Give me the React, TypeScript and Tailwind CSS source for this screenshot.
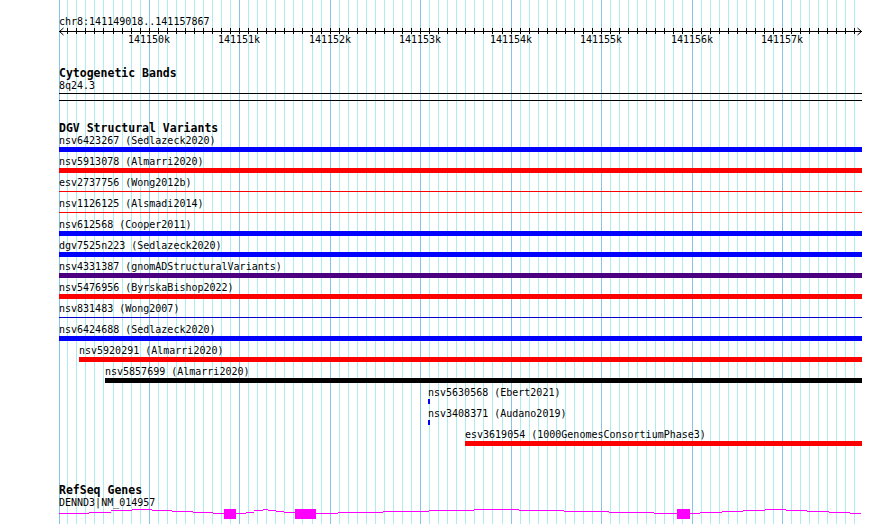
import React from "react";

type Variant = {
  label: string;
  x: number;
  kind: "bar" | "line" | "tick";
  color: string;
};

const variants: Variant[] = [
  { label: "nsv6423267 (Sedlazeck2020)", x: 59, kind: "bar", color: "bg-[#0000ff]" },
  { label: "nsv5913078 (Almarri2020)", x: 59, kind: "bar", color: "bg-[#ff0000]" },
  { label: "esv2737756 (Wong2012b)", x: 59, kind: "line", color: "bg-[#ff0000]" },
  { label: "nsv1126125 (Alsmadi2014)", x: 59, kind: "line", color: "bg-[#ff0000]" },
  { label: "nsv612568 (Cooper2011)", x: 59, kind: "bar", color: "bg-[#0000ff]" },
  { label: "dgv7525n223 (Sedlazeck2020)", x: 59, kind: "bar", color: "bg-[#0000ff]" },
  { label: "nsv4331387 (gnomADStructuralVariants)", x: 59, kind: "bar", color: "bg-[#4b0082]" },
  { label: "nsv5476956 (ByrskaBishop2022)", x: 59, kind: "bar", color: "bg-[#ff0000]" },
  { label: "nsv831483 (Wong2007)", x: 59, kind: "line", color: "bg-[#0000cc]" },
  { label: "nsv6424688 (Sedlazeck2020)", x: 59, kind: "bar", color: "bg-[#0000ff]" },
  { label: "nsv5920291 (Almarri2020)", x: 79, kind: "bar", color: "bg-[#ff0000]" },
  { label: "nsv5857699 (Almarri2020)", x: 105, kind: "bar", color: "bg-black" },
  { label: "nsv5630568 (Ebert2021)", x: 428, kind: "tick", color: "bg-[#0000ff]" },
  { label: "nsv3408371 (Audano2019)", x: 428, kind: "tick", color: "bg-[#0000ff]" },
  { label: "esv3619054 (1000GenomesConsortiumPhase3)", x: 465, kind: "bar", color: "bg-[#ff0000]" },
];

// minor gridlines every 100bp, major every 1kb
const ticks = Array.from({ length: 88 }, (_, i) => {
  const k = i - 9;
  return { x: Math.round(148.7 + 9.047 * k), major: k % 10 === 0, k };
});

const rulerLabels = ticks
  .filter((t) => t.major)
  .map((t) => ({ x: t.x, text: `${141150 + t.k / 10}k` }));

const intron: [number, number, number][] = [
  [59, 89, 513], [89, 111, 512], [111, 132, 510], [132, 152, 509], [152, 172, 510],
  [172, 193, 511], [193, 213, 512], [213, 224, 513],
  [236, 246, 513], [246, 254, 512], [254, 263, 510], [263, 268, 509], [268, 276, 510],
  [276, 284, 511], [284, 295, 512],
  [316, 338, 513], [338, 383, 512], [383, 429, 511], [429, 474, 510], [474, 519, 509],
  [519, 564, 510], [564, 609, 511], [609, 654, 512], [654, 677, 513],
  [690, 700, 513], [700, 722, 512], [722, 743, 511], [743, 765, 510], [765, 786, 509],
  [786, 807, 510], [807, 829, 511], [829, 850, 512], [850, 861, 513],
];

const exons: [number, number][] = [
  [224, 236],
  [295, 316],
  [677, 690],
];

function Grid() {
  return (
    <svg className="absolute inset-0" width={890} height={524} shapeRendering="crispEdges">
      <line x1={59.5} x2={59.5} y1={0} y2={524} stroke="#86c5ea" />
      {ticks.map((t) => (
        <line
          key={t.k}
          x1={t.x + 0.5}
          x2={t.x + 0.5}
          y1={0}
          y2={524}
          stroke={t.major ? "#86c5ea" : "#aeecf0"}
        />
      ))}
    </svg>
  );
}

function Ruler() {
  return (
    <div className="relative h-[21px]">
      <svg className="absolute left-0 top-0" width={890} height={9} shapeRendering="crispEdges">
        <line x1={59} x2={862} y1={4.5} y2={4.5} stroke="#000" />
        {ticks.map((t) => (
          <line key={t.k} x1={t.x + 0.5} x2={t.x + 0.5} y1={1} y2={7} stroke="#000" />
        ))}
      </svg>
      <svg className="absolute left-0 top-0" width={890} height={9}>
        <polyline points="63.5,1 59.5,4.5 63.5,8" fill="none" stroke="#000" />
        <polyline points="857.5,1 861.5,4.5 857.5,8" fill="none" stroke="#000" />
      </svg>
      {rulerLabels.map((l) => (
        <span
          key={l.text}
          className="absolute top-[7px] -translate-x-1/2 text-[10px] leading-[11px]"
          style={{ left: l.x }}
        >
          {l.text}
        </span>
      ))}
    </div>
  );
}

function VariantRow({ v }: { v: Variant }) {
  const offset = v.x - 59;
  return (
    <div className="h-[21px] pl-[59px] w-[862px]">
      <div className="h-[13px] whitespace-nowrap text-[10px] leading-[13px]" style={{ marginLeft: offset }}>
        {v.label}
      </div>
      {v.kind === "bar" && <div className={`h-[5px] ${v.color}`} style={{ marginLeft: offset }} />}
      {v.kind === "line" && (
        <div className="h-[5px] pt-[2px]" style={{ marginLeft: offset }}>
          <div className={`h-px ${v.color}`} />
        </div>
      )}
      {v.kind === "tick" && <div className={`h-[5px] w-[2px] ${v.color}`} style={{ marginLeft: offset }} />}
    </div>
  );
}

function TrackTitle({ children, className = "" }: { children: React.ReactNode; className?: string }) {
  return <div className={`pl-[59px] text-[11.5px] font-bold ${className}`}>{children}</div>;
}

function Gene() {
  return (
    <svg width={890} height={11} shapeRendering="crispEdges">
      {intron.map(([a, b, y]) => (
        <line key={a} x1={a} x2={b} y1={y - 509 + 0.5} y2={y - 509 + 0.5} stroke="#ff00ff" />
      ))}
      {exons.map(([a, b]) => (
        <rect key={a} x={a} y={0} width={b - a} height={10} fill="#ff00ff" />
      ))}
    </svg>
  );
}

export default function App() {
  return (
    <div className="relative h-[524px] w-[890px] overflow-hidden bg-white font-['DejaVu_Sans_Mono',monospace] text-black">
      <Grid />
      <div className="relative flex flex-col">
        <div className="pl-[59px] pt-[16px] text-[10px] leading-[11px]">chr8:141149018..141157867</div>
        <Ruler />

        <TrackTitle className="mt-[18px] leading-[14px]">Cytogenetic Bands</TrackTitle>
        <div className="pl-[59px] text-[10px] leading-[11px]">8q24.3</div>
        <div className="ml-[59px] mt-[2px] h-[8px] w-[803px] border-y border-black" />

        <TrackTitle className="mt-[21px] leading-[12px]">DGV Structural Variants</TrackTitle>
        {variants.map((v) => (
          <VariantRow key={v.label} v={v} />
        ))}

        <TrackTitle className="mt-[35px] leading-[12px]">RefSeq Genes</TrackTitle>
        <div className="pl-[59px] text-[10px] leading-[13px]">DENND3|NM_014957</div>
        <Gene />
      </div>
    </div>
  );
}
